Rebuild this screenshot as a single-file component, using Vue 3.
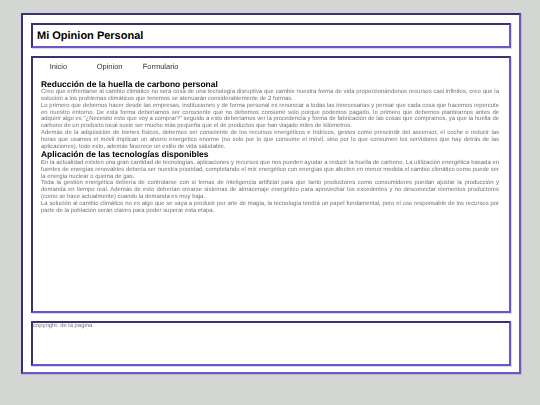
<template>
  <div class="page">
    <div class="wrap">
      <header class="box head"><h1>Mi Opinion Personal</h1></header>
      <main class="box main">
        <nav class="nav">
          <a class="n1">Inicio</a>
          <a class="n2">Opinion</a>
          <a class="n3">Formulario</a>
        </nav>
        <article class="art">
          <h2>Reducción de la huella de carbono personal</h2>
          <p>Creo que enfrentarse al cambio climático no será cosa de una tecnología disruptiva que cambie nuestra forma de vida proporcionándonos recursos casi infinitos, creo que la solución a los problemas climáticos que tenemos se atenuarán considerablemente de 2 formas.</p>
          <p>Lo primero que debemos hacer desde las empresas, instituciones y de forma personal es renunciar a todas las innecesarias y pensar que cada cosa que hacemos repercute en nuestro entorno. De esta forma deberíamos ser consciente que no debemos consumir solo porque podemos pagarlo, lo primero que debemos plantearnos antes de adquirir algo es "¿Necesito esto que voy a comprar?" seguido a esto deberíamos ver la procedencia y forma de fabricación de las cosas que compramos, ya que la huella de carbono de un producto local suele ser mucho más pequeña que el de productos que han viajado miles de kilómetros.</p>
          <p>Además de la adquisición de bienes físicos, debemos ser consciente de los recursos energéticos e hídricos, gestos como prescindir del ascensor, el coche o reducir las horas que usamos el móvil implican un ahorro energético enorme (no solo por lo que consume el móvil, sino por lo que consumen los servidores que hay detrás de las aplicaciones), todo esto, además favorece un estilo de vida saludable.</p>
          <h2>Aplicación de las tecnologías disponibles</h2>
          <p>En la actualidad existen una gran cantidad de tecnologías, aplicaciones y recursos que nos pueden ayudar a reducir la huella de carbono. La utilización energética basada en fuentes de energías renovables debería ser nuestra prioridad, completando el mix energético con energías que afecten en menor medida el cambio climático como puede ser la energía nuclear o quema de gas.</p>
          <p>Toda la gestión energética debería de controlarse con si temas de inteligencia artificial para que tanto productores como consumidores puedan ajustar la producción y demanda en tiempo real. Además de esto deberían crearse sistemas de almacenaje energético para aprovechar los excedentes y no desconectar elementos productores (como se hace actualmente) cuando la demanda es muy baja.</p>
          <p>La solución al cambio climático no es algo que se vaya a producir por arte de magia, la tecnología tendrá un papel fundamental, pero el uso responsable de los recursos por parte de la población serán claves para poder superar esta etapa.</p>
        </article>
      </main>
      <footer class="box foot"><span class="copy">copyright: de la pagina</span></footer>
    </div>
  </div>
</template>

<script setup>
</script>

<style>
html, body { margin: 0; background: #d4d6d3; }
</style>

<style scoped>
.page {
  width: 540px;
  height: 405px;
  box-sizing: border-box;
  padding: 13px 19px 0 21px;
  font-family: "Liberation Sans", Arial, sans-serif;
  text-rendering: geometricPrecision;
}
.wrap, .box {
  box-sizing: border-box;
  background: #fff;
  border: 2px solid;
  border-color: #3b3170 #6a57c4 #6a57c4 #3b3170;
  box-shadow: 1px 1px 0 rgba(106, 87, 196, 0.25);
}
.wrap {
  height: 361px;
  padding: 8px 8px 6px;
  display: flex;
  flex-direction: column;
  gap: 8px;
}
.head { height: 25px; flex: none; display: flex; align-items: center; padding-left: 4px; }
h1 { margin: 0; font-size: 11px; font-weight: 700; color: #000; }
.main { height: 257px; flex: none; padding: 0 10px 0 8px; }
.nav { display: flex; height: 16px; align-items: center; font-size: 7.5px; color: #333; filter: blur(0.2px); }
.n1 { margin-left: 8.7px; width: 47px; }
.n2 { width: 46px; }
.art { margin-top: 5.6px; filter: blur(0.2px); }
h2 { margin: 0; font-size: 8.45px; line-height: 9.6px; font-weight: 700; color: #000; }
p {
  margin: 0;
  font-size: 5.94px;
  line-height: 6.8px;
  color: #737373;
  text-align: justify;
}
.foot { height: 45px; flex: none; font-size: 5.9px; line-height: 6.5px; color: #757575; }
.copy { display: block; filter: blur(0.2px); }
</style>
